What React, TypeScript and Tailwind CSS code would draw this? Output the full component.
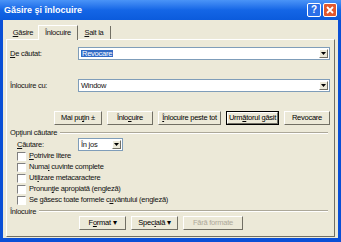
import React from 'react';

const font = { fontFamily: '"Liberation Sans", Arial, sans-serif' };

const U: React.FC<{ children: React.ReactNode }> = ({ children }) => <span className="underline underline-offset-1">{children}</span>;

const Btn: React.FC<{ w: string; def?: boolean; disabled?: boolean; children: React.ReactNode }> = ({ w, def, disabled, children }) => (
  <div className={`${w} h-[14px] ${def ? 'border border-black' : ''}`}>
    <div className="w-full h-full border border-t-white border-l-white border-r-[#716f64] border-b-[#716f64] bg-[#ECE9D8] flex items-center justify-center">
      <span className={disabled ? 'text-[#aca899]' : 'text-black'}>{children}</span>
    </div>
  </div>
);

const Arrow: React.FC = () => (
  <div className="w-[9px] h-[9px] bg-[#ECE9D8] border border-t-white border-l-white border-r-[#716f64] border-b-[#716f64] flex items-center justify-center">
    <svg width="5" height="3" viewBox="0 0 5 3"><path d="M0 0h5L2.5 3z" fill="#000" /></svg>
  </div>
);

const Combo: React.FC<{ children: React.ReactNode; w: string }> = ({ children, w }) => (
  <div className={`${w} h-[13px] bg-white border border-[#7f9db9] flex items-center justify-between pl-[2px] pr-[1px]`}>
    <div className="flex items-center">{children}</div>
    <Arrow />
  </div>
);

const Check: React.FC<{ children: React.ReactNode }> = ({ children }) => (
  <div className="flex items-center h-[11px] gap-[3px]">
    <div className="w-[9px] h-[9px] bg-white border border-t-[#808080] border-l-[#808080] border-r-white border-b-white" />
    <span>{children}</span>
  </div>
);

const Group: React.FC<{ children: React.ReactNode }> = ({ children }) => (
  <div className="flex items-center gap-[3px] pr-[3px]">
    <span>{children}</span>
    <div className="flex-1 h-[2px] border-t border-t-[#aca899] border-b border-b-white" />
  </div>
);

export default function App() {
  return (
    <div className="w-[341px] h-[242px] bg-[#0a4fd6] flex flex-col text-[7.5px] tracking-[-0.25px] leading-none text-[#111]" style={font}>
      <div className="h-[20px] shrink-0 flex items-center justify-between pl-[4px] pr-[4px] bg-gradient-to-b from-[#4a94f7] via-[#1466e6] to-[#0b5bdc]">
        <span className="text-white font-bold text-[9px] tracking-normal">Găsire şi înlocuire</span>
        <div className="flex gap-[2px]">
          <div className="w-[14px] h-[14px] rounded-[2px] border border-white bg-[#2b6fe8] flex items-center justify-center text-white font-bold text-[10px]">?</div>
          <div className="w-[14px] h-[14px] rounded-[2px] border border-white bg-[#e2582e] flex items-center justify-center">
            <svg width="8" height="8" viewBox="0 0 8 8"><path d="M1 1L7 7M7 1L1 7" stroke="#fff" strokeWidth="1.8" /></svg>
          </div>
        </div>
      </div>
      <div className="flex-1 mx-[3px] mb-[4px] bg-[#ECE9D8] flex flex-col px-[3px] pt-[4px] pb-[1px]">
        <div className="h-[15px] flex items-end pl-[2px]">
          <div className="h-[13px] w-[30px] flex items-center justify-center"><U>G</U>ăsire</div>
          <div className="h-[15px] w-[40px] flex items-center justify-center bg-[#ECE9D8] border border-b-0 border-t-white border-l-white border-r-[#716f64] -mb-px relative z-10">Înlocuire</div>
          <div className="h-[13px] w-[33px] flex items-center justify-center border-r border-r-[#716f64]"><U>S</U>alt la</div>
        </div>
        <div className="flex-1 border border-t-white border-l-white border-r-[#716f64] border-b-[#716f64] flex flex-col pl-[3px] pr-[3px]">
          <div className="flex items-center mt-[7px] h-[13px]">
            <span className="w-[68px]"><U>D</U>e căutat:</span>
            <Combo w="w-[252px]"><span className="bg-[#316ac5] text-white px-[1px]">Revocare</span></Combo>
          </div>
          <div className="flex items-center mt-[19px] h-[13px]">
            <span className="w-[68px]">Înlocuire cu:</span>
            <Combo w="w-[252px]"><span>Window</span></Combo>
          </div>
          <div className="flex mt-[19px] ml-[44px] gap-[5px]">
            <Btn w="w-[48px]">Mai pu<U>ţ</U>in ±</Btn>
            <Btn w="w-[46px]">Înlo<U>c</U>uire</Btn>
            <Btn w="w-[63px]"><U>Î</U>nlocuire peste tot</Btn>
            <Btn w="w-[53px]" def>Urm<U>ă</U>torul găsit</Btn>
            <Btn w="w-[46px]">Revocare</Btn>
          </div>
          <div className="mt-[4px]"><Group>Opţiuni căutare</Group></div>
          <div className="flex items-center mt-[2px] ml-[7px] h-[12px]">
            <span className="w-[61px]"><U>C</U>ăutare:</span>
            <Combo w="w-[45px]"><span>În jos</span></Combo>
          </div>
          <div className="flex flex-col ml-[7px]">
            <Check><U>P</U>otrivire litere</Check>
            <Check>Numa<U>i</U> cuvinte complete</Check>
            <Check>Uti<U>l</U>izare metacaractere</Check>
            <Check>Pronun<U>ţ</U>ie apropiată (engleză)</Check>
            <Check>Se găsesc toate formele c<U>u</U>vântului (engleză)</Check>
          </div>
          <div className="mt-[2px]"><Group>Înlocuire</Group></div>
          <div className="flex mt-[1px] ml-[69px] gap-[5px]">
            <Btn w="w-[47px]">F<U>o</U>rmat ▾</Btn>
            <Btn w="w-[47px]">Spec<U>i</U>ală ▾</Btn>
            <Btn w="w-[60px]" disabled>Fără formate</Btn>
          </div>
        </div>
      </div>
    </div>
  );
}
